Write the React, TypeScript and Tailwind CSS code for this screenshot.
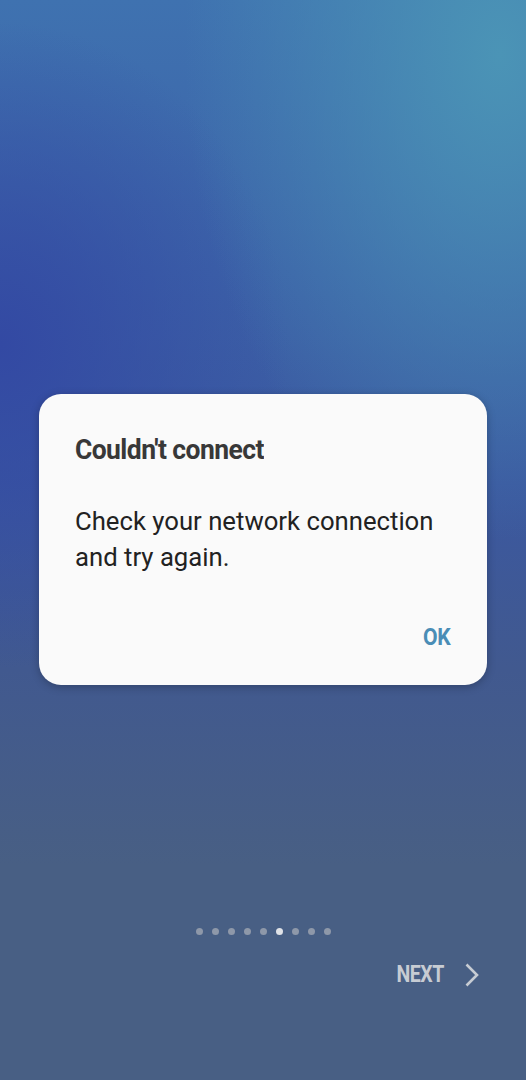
import React from "react";

export default function App() {
  const dots = [0, 1, 2, 3, 4, 5, 6, 7, 8];
  return (
    <div
      className="relative w-[526px] h-[1080px] overflow-hidden flex flex-col bg-[radial-gradient(ellipse_60%_45%_at_95%_5%,#4b94b6_0%,rgba(75,148,182,0)_100%),radial-gradient(ellipse_55%_30%_at_0%_32%,#3349a3_0%,rgba(51,73,163,0)_100%),linear-gradient(180deg,#3f72b0_0%,#3c62a8_25%,#3b58a0_45%,#41598f_62%,#485f84_80%,#485f84_100%)]"
      style={{ fontFamily: "Roboto, 'Noto Sans', sans-serif" }}
    >
      <div className="pt-[394px] px-[39px]">
        <div className="h-[291px] rounded-[22px] bg-[#fafafa] shadow-[0_2px_8px_rgba(0,0,0,0.25)] px-[36px] pt-[39px] flex flex-col">
          <div className="text-[28px] leading-[34px] font-bold text-[#383838] tracking-[-0.6px] origin-left scale-x-[0.945]">
            Couldn't connect
          </div>
          <div className="mt-[36px] text-[25.7px] leading-[36px] text-[#222]">
            Check your network connection
            <br />
            and try again.
          </div>
          <div className="mt-[48px] flex justify-end pr-[1px]">
            <span className="text-[23.5px] leading-[28px] font-bold text-[#4a8db6] tracking-[-0.5px] origin-right scale-x-[0.9]">
              OK
            </span>
          </div>
        </div>
      </div>
      <div className="mt-[243px] flex justify-center gap-[9px] pl-[1px]">
        {dots.map((i) => (
          <div
            key={i}
            className={
              i === 5
                ? "w-[7px] h-[7px] rounded-full bg-[#dfe2e7]"
                : "w-[7px] h-[7px] rounded-full bg-[#8e98a9]"
            }
          />
        ))}
      </div>
      <div className="mt-[26px] flex justify-end items-center pr-[46px] gap-[20px]">
        <span className="text-[23px] leading-[28px] font-bold text-[#c7ccd3] tracking-[-0.5px] origin-right scale-x-[0.85]">
          NEXT
        </span>
        <svg width="16" height="24" viewBox="0 0 16 24" fill="none">
          <path d="M2.5 1.5 L13 12 L2.5 22.5" stroke="#c7ccd3" strokeWidth="2.6" strokeLinecap="butt" strokeLinejoin="miter" />
        </svg>
      </div>
    </div>
  );
}
